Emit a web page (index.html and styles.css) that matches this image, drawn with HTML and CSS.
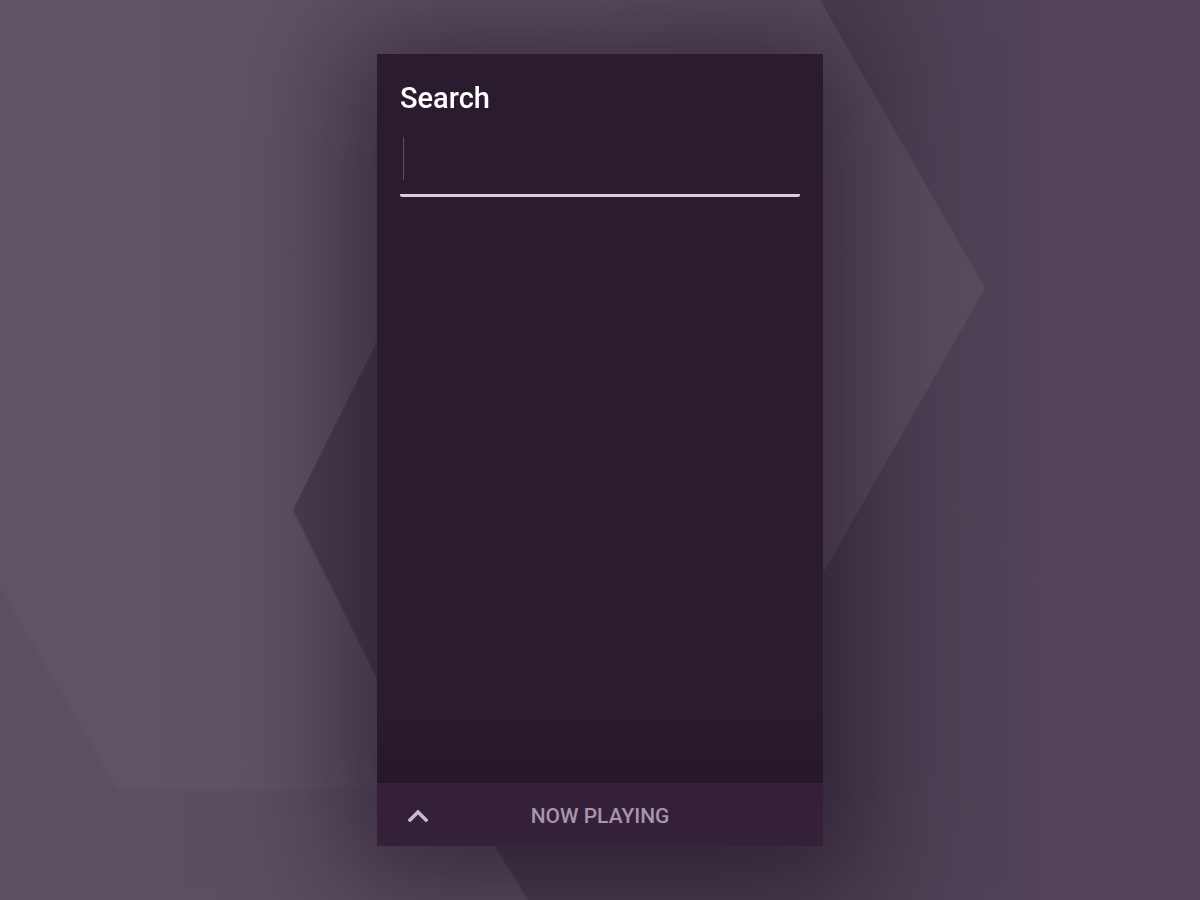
FILE: index.html
```html
<!DOCTYPE html>
<html lang="en">
<head>
<meta charset="utf-8">
<title>Search</title>
<link rel="stylesheet" href="styles.css">
</head>
<body>
<svg class="backdrop" viewBox="0 0 1200 900" preserveAspectRatio="none" aria-hidden="true">
  <defs>
    <linearGradient id="bg-lit" gradientUnits="userSpaceOnUse" x1="0" y1="0" x2="985" y2="0">
      <stop offset="0" stop-color="#605366"/>
      <stop offset="0.55" stop-color="#5f5265"/>
      <stop offset="1" stop-color="#584b5e"/>
    </linearGradient>
    <linearGradient id="bg-shade" gradientUnits="userSpaceOnUse" x1="820" y1="0" x2="1080" y2="0">
      <stop offset="0" stop-color="#4b3e51"/>
      <stop offset="1" stop-color="#534459"/>
    </linearGradient>
  </defs>
  <rect width="1200" height="900" fill="url(#bg-lit)"/>
  <!-- lower band on the left -->
  <polygon points="0,588 118,790 460,790 528,900 0,900" fill="#5c4f62"/>
  <!-- darker wedge reaching out from behind the panel -->
  <polygon points="400,295 293,510 400,725" fill="#4c3f52"/>
  <!-- shaded ground to the right of the lit facet, wrapping under the panel -->
  <polygon points="820,0 1200,0 1200,900 528,900 460,790 700,790 985,288" fill="url(#bg-shade)"/>
  <!-- faint crease bottom right -->
  <line x1="950" y1="500" x2="1200" y2="740" stroke="#5b4b60" stroke-width="1.5" opacity="0.25"/>
</svg>

<main class="stage">
  <section class="panel">
    <header class="panel-head">
      <h1 class="title">Search</h1>
      <label class="field">
        <span class="caret"></span>
        <input class="field-input" type="text" aria-label="Search">
      </label>
    </header>
    <div class="results"></div>
    <footer class="now-playing">
      <svg class="chevron" viewBox="0 0 20 13" aria-hidden="true">
        <polyline points="2,11 10,3 18,11" fill="none" stroke="#c8bbca" stroke-width="3.6" stroke-linecap="square"/>
      </svg>
      <span class="now-label">NOW PLAYING</span>
    </footer>
  </section>
</main>
</body>
</html>
```

FILE: styles.css
```css
html, body {
  margin: 0;
  height: 100%;
}

body {
  background: #5a4c5f;
  font-family: Roboto, "Noto Sans", "Liberation Sans", sans-serif;
  overflow: hidden;
}

.backdrop {
  position: fixed;
  inset: 0;
  width: 100%;
  height: 100%;
  z-index: 0;
}

.stage {
  position: relative;
  z-index: 1;
  display: flex;
  justify-content: center;
  padding-top: 54px;
}

.panel {
  width: 446px;
  height: 792px;
  background: #2a1b2f;
  display: flex;
  flex-direction: column;
  box-shadow: 0 10px 110px 30px rgba(24, 10, 28, 0.55);
}

.panel-head {
  padding: 24px 23px 0;
}

.title {
  margin: 0;
  color: #ffffff;
  font-size: 29px;
  font-weight: 500;
  line-height: 40px;
  letter-spacing: 0;
}

.field {
  display: flex;
  align-items: flex-start;
  height: 58px;
  margin-top: 18px;
  border-bottom: 3px solid #d9cdda;
  border-radius: 0 0 2px 2px;
}

.caret {
  width: 1px;
  height: 43px;
  margin-left: 3px;
  margin-top: 1px;
  background: #5d4d60;
}

.field-input {
  flex: 1;
  height: 44px;
  border: 0;
  outline: 0;
  padding: 0;
  background: transparent;
  color: #ffffff;
  font: inherit;
  font-size: 20px;
}

.results {
  flex: 1;
  background: linear-gradient(to bottom, #2a1b2f 0, #2a1b2f 88%, #26172a 100%);
}

.now-playing {
  height: 63px;
  flex: none;
  background: #35203a;
  display: flex;
  align-items: center;
  position: relative;
}

.chevron {
  position: absolute;
  left: 31px;
  top: 26px;
  width: 20px;
  height: 13px;
}

.now-label {
  flex: 1;
  text-align: center;
  color: #a797a9;
  font-size: 21px;
  font-weight: 500;
  margin-top: 3px;
}
```
